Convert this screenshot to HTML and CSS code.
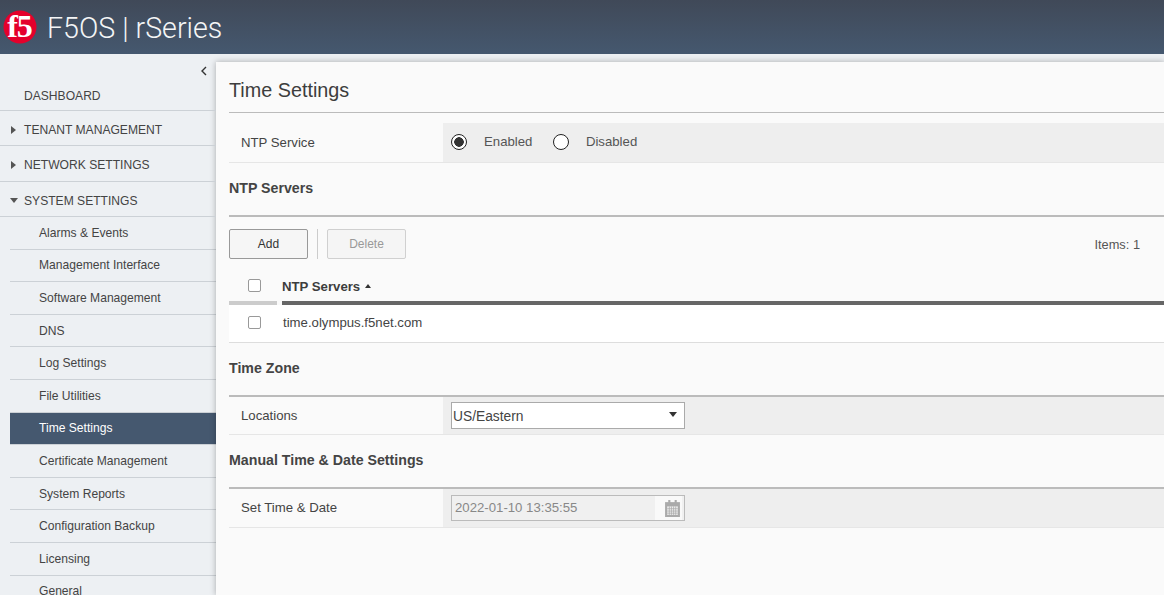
FILE: index.html
```html
<!DOCTYPE html>
<html lang="en">
<head>
    <meta charset="UTF-8">
    <meta name="viewport" content="width=device-width, initial-scale=1.0">
    <title>F5OS | rSeries</title>
    <link rel="stylesheet" href="styles.css">
</head>
<body>
    <header class="topbar">
        <svg class="logo" viewBox="0 0 34 34" width="34" height="34">
            <circle cx="17" cy="17" r="16.5" fill="#e4002b"/>
            <text class="logo-text" x="16.5" y="27" text-anchor="middle">f5</text>
        </svg>
        <div class="product">F5OS | rSeries</div>
    </header>
    <div class="layout">
        <nav class="sidebar">
            <div class="collapse">
                <svg viewBox="0 0 8 10" width="8" height="10"><path d="M6 1 2 5l4 4" fill="none" stroke="#333" stroke-width="1.4"/></svg>
            </div>
            <a class="nav-top nav-first">DASHBOARD</a>
            <a class="nav-top"><span class="arrow-right"></span>TENANT MANAGEMENT</a>
            <a class="nav-top"><span class="arrow-right"></span>NETWORK SETTINGS</a>
            <a class="nav-top"><span class="arrow-down"></span>SYSTEM SETTINGS</a>
            <a class="nav-sub">Alarms &amp; Events</a>
            <a class="nav-sub">Management Interface</a>
            <a class="nav-sub">Software Management</a>
            <a class="nav-sub">DNS</a>
            <a class="nav-sub">Log Settings</a>
            <a class="nav-sub">File Utilities</a>
            <a class="nav-sub active">Time Settings</a>
            <a class="nav-sub">Certificate Management</a>
            <a class="nav-sub">System Reports</a>
            <a class="nav-sub">Configuration Backup</a>
            <a class="nav-sub">Licensing</a>
            <a class="nav-sub">General</a>
        </nav>
        <main class="panel">
            <h1>Time Settings</h1>

            <div class="form-row first-row">
                <div class="form-label">NTP Service</div>
                <div class="form-value radios">
                    <span class="radio checked"></span><span class="radio-label">Enabled</span>
                    <span class="radio"></span><span class="radio-label">Disabled</span>
                </div>
            </div>

            <h2>NTP Servers</h2>
            <div class="toolbar">
                <button class="btn">Add</button>
                <span class="toolbar-sep"></span>
                <button class="btn disabled">Delete</button>
                <span class="items">Items: 1</span>
            </div>
            <div class="grid-head">
                <div class="cell-check"><span class="checkbox"></span></div>
                <div class="cell-name">NTP Servers <span class="sort-up"></span></div>
            </div>
            <div class="grid-row">
                <div class="cell-check"><span class="checkbox"></span></div>
                <div class="cell-value">time.olympus.f5net.com</div>
            </div>

            <h2>Time Zone</h2>
            <div class="form-row">
                <div class="form-label">Locations</div>
                <div class="form-value">
                    <div class="select">US/Eastern<span class="select-arrow"></span></div>
                </div>
            </div>

            <h2>Manual Time &amp; Date Settings</h2>
            <div class="form-row date-row">
                <div class="form-label">Set Time &amp; Date</div>
                <div class="form-value">
                    <div class="date-input">
                        <span class="date-text">2022-01-10 13:35:55</span>
                        <span class="date-icon">
                            <svg viewBox="0 0 14 16" width="15" height="17">
                                <path d="M0 2h14v14H0z" fill="#aaa"/>
                                <path d="M3 0h2v3H3zM9 0h2v3H9z" fill="#aaa"/>
                                <path d="M2 6h10v8H2z" fill="#eee"/>
                                <path d="M2 8.2h10M2 10.4h10M2 12.4h10M4 6v8M6 6v8M8 6v8M10 6v8" stroke="#aaa" stroke-width=".7"/>
                            </svg>
                        </span>
                    </div>
                </div>
            </div>
        </main>
    </div>
</body>
</html>
```

FILE: styles.css
```css
* {
    box-sizing: border-box;
}
html, body {
    height: 100%;
}
body {
    margin: 0;
    font-family: "Liberation Sans", Arial, sans-serif;
    font-size: 13.2px;
    color: #444;
    background: #edf0f3;
    overflow: hidden;
}
.topbar {
    height: 54px;
    display: flex;
    align-items: center;
    padding-left: 3px;
    background: linear-gradient(#404958, #45586f);
}
.logo {
    display: block;
    overflow: visible;
}
.logo-text {
    font-family: "Liberation Serif", serif;
    font-weight: bold;
    font-size: 32px;
    letter-spacing: -1px;
    fill: #fff;
}
.product {
    margin-left: 10px;
    padding-top: 2px;
    font-family: Roboto, sans-serif;
    font-weight: 300;
    font-size: 28.6px;
    color: #f4f5f6;
}
.layout {
    display: flex;
    height: 541px;
}
.sidebar {
    width: 216px;
    flex: none;
    overflow: hidden;
}
.collapse {
    height: 24px;
    display: flex;
    justify-content: flex-end;
    align-items: center;
    padding: 9px 8px 0 0;
}
.nav-top, .nav-sub {
    display: flex;
    align-items: center;
    color: #444;
    border-bottom: 1px solid #ccd1d6;
}
.nav-top {
    position: relative;
    height: 35.5px;
    padding-left: 24px;
    padding-top: 4px;
    font-size: 12.1px;
}
.nav-first {
    height: 32.5px;
}
.nav-sub {
    height: 32.6px;
    margin-left: 10px;
    padding-left: 29px;
    font-size: 12.1px;
}
.nav-sub.active {
    background: #45586f;
    color: #fff;
}
.arrow-right {
    position: absolute;
    left: 11px;
    border-left: 5px solid #555;
    border-top: 4px solid transparent;
    border-bottom: 4px solid transparent;
}
.arrow-down {
    position: absolute;
    left: 10px;
    border-top: 5px solid #555;
    border-left: 4px solid transparent;
    border-right: 4px solid transparent;
}
.panel {
    flex: 1;
    margin-top: 8px;
    padding-left: 13px;
    background: #fafafa;
    box-shadow: 0 0 6px rgba(0, 0, 0, 0.3);
    overflow: hidden;
}
h1 {
    margin: 0;
    height: 51px;
    padding-top: 16px;
    font-size: 19.8px;
    line-height: 24px;
    font-weight: normal;
    color: #3d3d3d;
    border-bottom: 1px solid #bbb;
}
h2 {
    margin: 0;
    height: 54px;
    padding-top: 17px;
    font-size: 14.2px;
    line-height: 17px;
    font-weight: bold;
    color: #444;
    border-bottom: 2px solid #bbb;
}
.form-row {
    display: flex;
    height: 38px;
    border-bottom: 1px solid #e6e6e6;
}
.first-row {
    height: 40px;
    margin-top: 10px;
}
.date-row {
    height: 39px;
}
.form-label {
    width: 214px;
    flex: none;
    display: flex;
    align-items: center;
    padding-left: 12px;
}
.date-row .form-label {
    padding-bottom: 1px;
}
.form-value {
    flex: 1;
    display: flex;
    align-items: center;
    padding-left: 8px;
    background: #eee;
}
.radios {
    padding-bottom: 2px;
}
.radio {
    width: 16px;
    height: 16px;
    border: 1px solid #222;
    border-radius: 50%;
    background: #fff;
}
.radio.checked {
    border-width: 1.5px;
    background: radial-gradient(circle, #333 0, #333 4.5px, #fff 5px);
}
.radio-label {
    margin-left: 17px;
    margin-right: 20.5px;
    color: #555;
}
.toolbar {
    display: flex;
    align-items: center;
    height: 30px;
    margin-top: 12px;
}
.btn {
    width: 79px;
    height: 30px;
    padding: 0;
    font-family: inherit;
    font-size: 12px;
    color: #333;
    background: #f6f6f6;
    border: 1px solid #999;
    border-radius: 2px;
}
.btn.disabled {
    color: #999;
    background: #f5f5f5;
    border-color: #d0d0d0;
}
.toolbar-sep {
    width: 1px;
    height: 30px;
    margin: 0 9px;
    background: #ccc;
}
.items {
    margin-left: auto;
    margin-right: 24px;
    font-size: 12.8px;
    color: #555;
}
.grid-head {
    display: flex;
    height: 33px;
    margin-top: 13px;
}
.grid-head .cell-check {
    width: 48px;
    padding-bottom: 3px;
    border-bottom: 4px solid #ccc;
}
.grid-head .cell-name {
    flex: 1;
    margin-left: 5px;
    font-weight: bold;
    line-height: 30px;
    color: #3d3d3d;
    border-bottom: 4px solid #666;
}
.cell-check {
    display: flex;
    align-items: center;
    justify-content: center;
    width: 48px;
    flex: none;
    padding-left: 2px;
}
.grid-row .cell-check {
    padding-bottom: 2px;
}
.checkbox {
    width: 13px;
    height: 13px;
    background: #fff;
    border: 1px solid #999;
    border-radius: 2px;
}
.sort-up {
    display: inline-block;
    margin-left: 1px;
    vertical-align: 3px;
    border-bottom: 4px solid #333;
    border-left: 3.5px solid transparent;
    border-right: 3.5px solid transparent;
}
.grid-row {
    display: flex;
    height: 38px;
    background: #fff;
    border-bottom: 1px solid #ddd;
}
.cell-value {
    display: flex;
    align-items: center;
    margin-left: 6px;
    padding-bottom: 2px;
}
.select {
    position: relative;
    width: 234px;
    height: 27px;
    padding-left: 1px;
    font-size: 13.8px;
    line-height: 27px;
    color: #444;
    background: #fff;
    border: 1px solid #aaa;
}
.select-arrow {
    position: absolute;
    right: 7px;
    top: 9px;
    border-top: 5px solid #333;
    border-left: 4px solid transparent;
    border-right: 4px solid transparent;
}
.date-input {
    display: flex;
    justify-content: space-between;
    width: 234px;
    height: 26px;
    padding: 0 2px 0 3px;
    line-height: 24px;
    color: #888;
    background: #f0f0f0;
    border: 1px solid #bbb;
}
.date-icon {
    display: flex;
    align-items: center;
    justify-content: flex-end;
    width: 27px;
    padding-right: 2px;
    background: #f9f9f9;
}
```
